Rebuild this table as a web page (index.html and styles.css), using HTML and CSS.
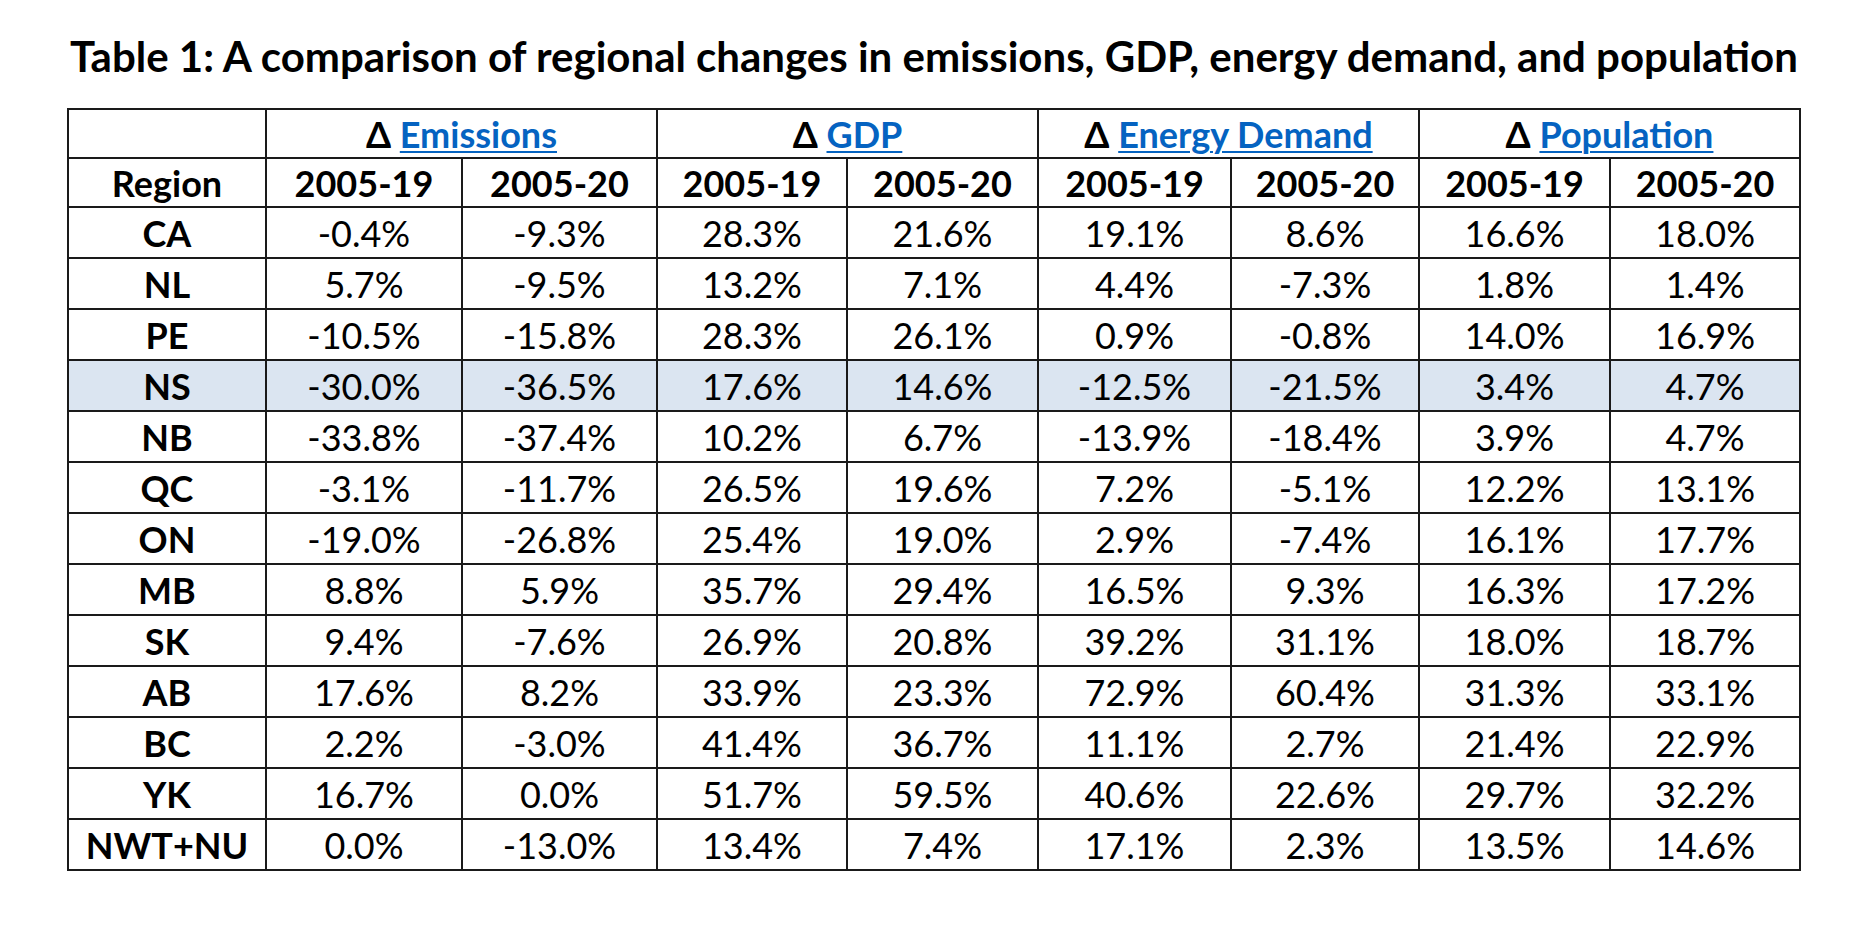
FILE: index.html
```html
<!DOCTYPE html>
<html lang="en">
<head>
<meta charset="utf-8">
<title>Table 1</title>
<link rel="stylesheet" href="styles.css">
</head>
<body>
<main class="page">
  <h1 class="title">Table 1: A comparison of regional changes in emissions, GDP, energy demand, and population</h1>
  <table class="data">
    <colgroup>
      <col class="c-region">
      <col class="c-e1"><col class="c-e2">
      <col class="c-g1"><col class="c-g2">
      <col class="c-n1"><col class="c-n2">
      <col class="c-p1"><col class="c-p2">
    </colgroup>
    <thead>
      <tr class="group">
        <th></th>
        <th colspan="2">Δ <a href="#">Emissions</a></th>
        <th colspan="2">Δ <a href="#">GDP</a></th>
        <th colspan="2">Δ <a href="#">Energy Demand</a></th>
        <th colspan="2">Δ <a href="#">Population</a></th>
      </tr>
      <tr class="sub">
        <th>Region</th>
        <th>2005-19</th><th>2005-20</th>
        <th>2005-19</th><th>2005-20</th>
        <th>2005-19</th><th>2005-20</th>
        <th>2005-19</th><th>2005-20</th>
      </tr>
    </thead>
    <tbody>
      <tr><th>CA</th><td>-0.4%</td><td>-9.3%</td><td>28.3%</td><td>21.6%</td><td>19.1%</td><td>8.6%</td><td>16.6%</td><td>18.0%</td></tr>
      <tr><th>NL</th><td>5.7%</td><td>-9.5%</td><td>13.2%</td><td>7.1%</td><td>4.4%</td><td>-7.3%</td><td>1.8%</td><td>1.4%</td></tr>
      <tr><th>PE</th><td>-10.5%</td><td>-15.8%</td><td>28.3%</td><td>26.1%</td><td>0.9%</td><td>-0.8%</td><td>14.0%</td><td>16.9%</td></tr>
      <tr class="hl"><th>NS</th><td>-30.0%</td><td>-36.5%</td><td>17.6%</td><td>14.6%</td><td>-12.5%</td><td>-21.5%</td><td>3.4%</td><td>4.7%</td></tr>
      <tr><th>NB</th><td>-33.8%</td><td>-37.4%</td><td>10.2%</td><td>6.7%</td><td>-13.9%</td><td>-18.4%</td><td>3.9%</td><td>4.7%</td></tr>
      <tr><th>QC</th><td>-3.1%</td><td>-11.7%</td><td>26.5%</td><td>19.6%</td><td>7.2%</td><td>-5.1%</td><td>12.2%</td><td>13.1%</td></tr>
      <tr><th>ON</th><td>-19.0%</td><td>-26.8%</td><td>25.4%</td><td>19.0%</td><td>2.9%</td><td>-7.4%</td><td>16.1%</td><td>17.7%</td></tr>
      <tr><th>MB</th><td>8.8%</td><td>5.9%</td><td>35.7%</td><td>29.4%</td><td>16.5%</td><td>9.3%</td><td>16.3%</td><td>17.2%</td></tr>
      <tr><th>SK</th><td>9.4%</td><td>-7.6%</td><td>26.9%</td><td>20.8%</td><td>39.2%</td><td>31.1%</td><td>18.0%</td><td>18.7%</td></tr>
      <tr><th>AB</th><td>17.6%</td><td>8.2%</td><td>33.9%</td><td>23.3%</td><td>72.9%</td><td>60.4%</td><td>31.3%</td><td>33.1%</td></tr>
      <tr><th>BC</th><td>2.2%</td><td>-3.0%</td><td>41.4%</td><td>36.7%</td><td>11.1%</td><td>2.7%</td><td>21.4%</td><td>22.9%</td></tr>
      <tr><th>YK</th><td>16.7%</td><td>0.0%</td><td>51.7%</td><td>59.5%</td><td>40.6%</td><td>22.6%</td><td>29.7%</td><td>32.2%</td></tr>
      <tr><th>NWT+NU</th><td>0.0%</td><td>-13.0%</td><td>13.4%</td><td>7.4%</td><td>17.1%</td><td>2.3%</td><td>13.5%</td><td>14.6%</td></tr>
    </tbody>
  </table>
</main>
</body>
</html>
```

FILE: styles.css
```css
html, body {
  margin: 0;
  padding: 0;
  background: #ffffff;
}

.page {
  width: 1868px;
  padding-top: 35px;
  font-family: Lato, "Open Sans", sans-serif;
  color: #000000;
}

.title {
  margin: 0;
  text-align: center;
  font-size: 42px;
  line-height: 42px;
  font-weight: 700;
  letter-spacing: 0;
}

.data {
  margin: 31px auto 0 auto;
  border-collapse: collapse;
  table-layout: fixed;
  width: 1734px;
  border: 2px solid #000000;
}

.c-region { width: 198px; }
.c-e1 { width: 196px; }
.c-e2 { width: 195px; }
.c-g1 { width: 190px; }
.c-g2 { width: 191px; }
.c-n1 { width: 193px; }
.c-n2 { width: 188px; }
.c-p1 { width: 191px; }
.c-p2 { width: 190px; }

.data th,
.data td {
  border: 2px solid #1a1a1a;
  padding: 0;
  height: 49px;
  text-align: center;
  vertical-align: middle;
  font-size: 36px;
  line-height: 36px;
  white-space: nowrap;
}

.data th {
  font-weight: 700;
}

.data td {
  font-weight: 400;
}

.data .group th {
  height: 47px;
}

.data .sub th {
  height: 47px;
}

.data a {
  color: #0563c1;
  text-decoration: underline;
  text-decoration-thickness: 2px;
  text-underline-offset: 3px;
}

.data .hl th,
.data .hl td {
  background: #dbe5f1;
}
```
